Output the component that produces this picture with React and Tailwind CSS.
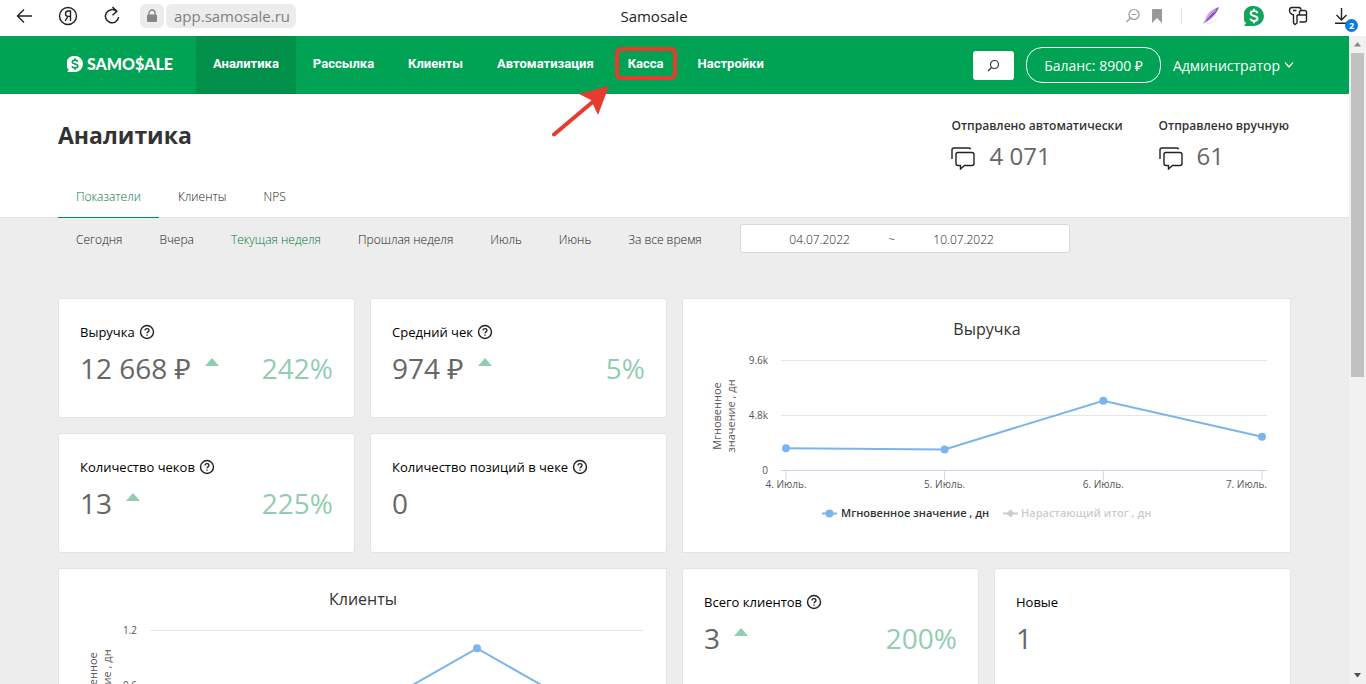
const menu = [
  { name: "Аналитика", active: true },
  { name: "Рассылка" },
  { name: "Клиенты" },
  { name: "Автоматизация" },
  { name: "Касса", marked: true },
  { name: "Настройки" },
];

const tabs = ["Показатели", "Клиенты", "NPS"];

const periods = ["Сегодня", "Вчера", "Текущая неделя", "Прошлая неделя", "Июль", "Июнь", "За все время"];

const days = ["4. Июль.", "5. Июль.", "6. Июль.", "7. Июль."];

function CoinIcon({ className, sign }) {
  return (
    <svg viewBox="0 0 20 20" className={className} aria-hidden="true">
      <path d="M10 0a10 10 0 1 1 0 20H1.2c-.9 0-1-.9-.4-1.4l1.4-1.4A10 10 0 0 1 10 0z" fill="currentColor" />
      <path
        d="M13.4 7.2c-.3-1.4-1.6-2.1-3.4-2.1-2 0-3.3.9-3.3 2.4 0 3.4 6.8 1.5 6.8 5 0 1.500-1.400 2.400-3.500 2.400-2 0-3.300-.8-3.600-2.300M10 2.800v2.400M10 14.800v2.400"
        fill="none"
        stroke={sign}
        strokeWidth="2"
      />
    </svg>
  );
}

function BrowserBar() {
  return (
    <div className="flex h-9 shrink-0 items-center bg-white pb-1 text-[#222]">
      <div className="flex w-[296px] shrink-0 items-center pl-4">
        <button aria-label="Назад">
          <svg width="17" height="16" viewBox="0 0 17 16" fill="none" stroke="currentColor" strokeWidth="1.4">
            <path d="M16 8H1.500M8 1.500 1.500 8 8 14.500" />
          </svg>
        </button>
        <button aria-label="Яндекс" className="ml-[25px]">
          <svg width="20" height="20" viewBox="0 0 20 20" fill="none" stroke="currentColor" strokeWidth="1.400">
            <circle cx="10" cy="10" r="8.500" />
            <path d="M12.500 15V5h-2.300C8.500 5 7.500 6.100 7.500 7.800c0 1.500.8 2.600 2.700 2.600h2.300M9.800 10.400 7.200 15" />
          </svg>
        </button>
        <button aria-label="Обновить" className="ml-[25px]">
          <svg width="18" height="20" viewBox="0 0 18 20" fill="none" stroke="currentColor" strokeWidth="1.500">
            <path d="M13.500 5.300A6.600 6.600 0 1 0 15.600 11M9.500 1l4.300 4.200-4.300 4" />
          </svg>
        </button>
        <button aria-label="Защищено" className="ml-[19px] flex size-6 items-center justify-center rounded-md bg-[#ececec]">
          <svg width="12" height="14" viewBox="0 0 12 14" fill="none">
            <path d="M3 6V4a3 3 0 0 1 6 0v2" stroke="#858585" strokeWidth="1.300" />
            <rect x="1" y="5.500" width="10" height="7.500" rx="1" fill="#858585" />
          </svg>
        </button>
        <span className="ml-[2px] flex h-6 flex-1 items-center rounded-md bg-[#ececec] pl-2 text-[15px] text-[#808080]">
          app.samosale.ru
        </span>
      </div>
      <div className="flex-1 text-center text-[15px]">Samosale</div>
      <div className="flex w-[354px] shrink-0 items-center justify-end pr-2">
        <svg width="16" height="16" viewBox="0 0 16 16" fill="none" stroke="#999" strokeWidth="1.200">
          <circle cx="9" cy="6.500" r="5" />
          <path d="M6.500 6.500h5M5.500 10 1.500 14" />
        </svg>
        <svg className="ml-[10px]" width="12" height="14" viewBox="0 0 12 14" fill="#999">
          <path d="M2 0h8a1 1 0 0 1 1 1v13l-5-5-5 5V1a1 1 0 0 1 1-1z" />
        </svg>
        <span className="ml-[18px] h-4 w-px bg-[#ddd]" />
        <svg className="ml-[19px]" width="20" height="20" viewBox="0 0 20 20">
          <path d="M4 18c5 1 11-3 13-8-3 5-8 7-13 8z" fill="#ddd" />
          <path d="M18 1C9 3 5 9 3 17c6-2 13-8 15-16z" fill="#cfaee6" />
          <path d="M18 1C11 5 6 11 2 18c5-4 13-9 16-17z" fill="#8d4fc2" />
          <path d="M15 4C10 7 6 12 2 18" stroke="#ead9f5" fill="none" strokeWidth=".8" />
        </svg>
        <CoinIcon className="ml-[23px] size-5 text-[#0fa65c]" sign="#fff" />
        <svg className="ml-[24px]" width="20" height="20" viewBox="0 0 20 20" fill="none" stroke="#222" strokeWidth="1.400">
          <path d="M9 9v8l-2 1.500L5.500 17V9C3 8 1.500 6.700 1.500 4.500c0-2 1-3 2.500-3h6.500c1.500 0 2.500 1 2.500 2.300M5 4.500h3.500" />
          <path d="M9 9h9.500M11.500 16h5a2 2 0 0 0 2-2V6.500a2 2 0 0 0-2-2h-3a2 2 0 0 0-2 2V9" />
        </svg>
        <div className="relative ml-[26px] flex w-[24px]">
          <svg width="16" height="18" viewBox="0 0 16 18" fill="none" stroke="#222" strokeWidth="1.400">
            <path d="M7.500 1v12M2.500 8l5 5 5-5M1 16.300h13" />
          </svg>
          <span className="absolute top-3 left-[11px] flex size-[13px] items-center justify-center rounded-full bg-[#0a7be0] text-[9px] font-bold text-white">
            2
          </span>
        </div>
      </div>
    </div>
  );
}

function Header() {
  return (
    <header className="flex h-[58px] items-center bg-[#00a254] pr-[55px] pl-[67px] text-white">
      <a href="#" className="flex w-[129px] items-center gap-1 pb-0.5 font-['Lato'] text-[16px] font-black">
        <CoinIcon className="size-4" sign="#00a254" />
        SAMO$ALE
      </a>
      <nav className="flex h-full font-['Roboto'] text-[13px] font-bold">
        {menu.map((item) => (
          <a
            key={item.name}
            href="#"
            className={`relative flex items-center px-[17px] pb-0.5 ${item.active ? "bg-[#00904a]" : ""}`}
          >
            {item.name}
            {item.marked && (
              <>
                <span className="absolute inset-x-1 top-[11px] h-[33px] rounded-md border-4 border-[#e63c30]" />
                <svg
                  className="absolute top-[49px] left-[-60px]"
                  width="60"
                  height="52"
                  viewBox="0 0 60 52"
                  fill="#e63c30"
                >
                  <path d="M3 49.500 44 15" stroke="#e63c30" strokeWidth="4" strokeLinecap="round" />
                  <path d="M58 1 28 9l12 6 7 15z" />
                </svg>
              </>
            )}
          </a>
        ))}
      </nav>
      <button aria-label="Поиск" className="ml-auto flex h-[29px] w-[41px] items-center justify-center rounded-[3px] bg-white">
        <svg width="13" height="13" viewBox="0 0 13 13" fill="none" stroke="#333" strokeWidth="1.200">
          <circle cx="7.500" cy="5.500" r="4" />
          <path d="M4.500 8.500 1 12" />
        </svg>
      </button>
      <button className="ml-3 h-9 rounded-[16px] border border-white px-[17px] text-[14px]">Баланс: 8900 ₽</button>
      <button className="ml-3 flex items-center gap-1 text-[14px]">
        Администратор
        <svg width="10" height="8" viewBox="0 0 10 8" fill="none" stroke="currentColor" strokeWidth="1.200">
          <path d="m1 1.500 4 4.500 4-4.500" />
        </svg>
      </button>
    </header>
  );
}

function Sent({ title, value }) {
  return (
    <div>
      <div className="text-[12px] leading-5 font-semibold text-[#333]">{title}</div>
      <div className="flex items-center gap-[14px] text-[24px] leading-10 text-[#666]">
        <svg className="mt-1" width="24" height="24" viewBox="0 0 24 24" fill="none" stroke="#222" strokeWidth="1.400">
          <path d="M1 13V4a2 2 0 0 1 2-2h15a2 2 0 0 1 1.700 1.300" />
          <path d="M7 6.500h14a2 2 0 0 1 2 2v9a2 2 0 0 1-2 2h-7.500L9.500 23v-3.500H7a2 2 0 0 1-2-2v-9a2 2 0 0 1 2-2z" />
        </svg>
        {value}
      </div>
    </div>
  );
}

function StatCard({ title, value, percent, help = true }) {
  return (
    <div className="rounded-[3px] border border-[#e4e4e4] bg-white px-[21px] pt-[23px]">
      <div className="flex items-center gap-1 text-[13px] leading-5 text-black">
        {title}
        {help && (
          <svg width="16" height="16" viewBox="0 0 16 16" fill="none" stroke="#222" strokeWidth="1.400">
            <circle cx="8" cy="8" r="6.500" />
            <path d="M6 6.600C6 5.400 6.900 4.700 8 4.700s2 .7 2 1.800c0 1.300-2 1.400-2 2.700M8 10.400v1.300" strokeWidth="1.300" />
          </svg>
        )}
      </div>
      <div className="mt-1 flex text-[28px] leading-[44px] text-[#666]">
        {value}
        {percent && (
          <>
            <svg className="mt-3 ml-[14px]" width="14" height="8" viewBox="0 0 14 8" fill="#92cdb1">
              <path d="M7 0 14 8H0z" />
            </svg>
            <span className="ml-auto text-[#92cdb1]">{percent}</span>
          </>
        )}
      </div>
    </div>
  );
}

function LineChart({ title, left, max, ticks, values }) {
  const right = 584;
  const top = 61;
  const bottom = 171;
  const step = (right - left - 10) / (values.length - 1);
  const x = (i) => left + 5 + i * step;
  const y = (v) => bottom - (v / max) * (bottom - top);

  return (
    <div className="col-span-2 row-span-2 border border-[#e4e4e4] bg-white">
      <svg viewBox="0 0 607 253" className="w-full" fill="#555" fontSize="10">
        <text x="304" y="36" fontSize="16" fill="#333" textAnchor="middle">
          {title}
        </text>
        <g textAnchor="middle" fontSize="11">
          <text transform="translate(38 117) rotate(-90)">Мгновенное</text>
          <text transform="translate(52 117) rotate(-90)">значение , дн</text>
        </g>
        {ticks.map((tick, i) => (
          <g key={tick}>
            <path
              d={`M${left} ${top + 55 * i + 0.5}H${right}`}
              stroke={i === ticks.length - 1 ? "#ccd6eb" : "#e6e6e6"}
            />
            <text x={left - 13} y={top + 55 * i + 4} textAnchor="end">
              {tick}
            </text>
          </g>
        ))}
        {days.map((day, i) => (
          <g key={day}>
            <path d={`M${x(i)} ${bottom}v10`} stroke="#ccd6eb" />
            <text
              x={i === days.length - 1 ? right : x(i)}
              y="189"
              textAnchor={i === days.length - 1 ? "end" : "middle"}
            >
              {day}
            </text>
          </g>
        ))}
        <polyline
          points={values.map((v, i) => `${x(i)},${y(v)}`).join(" ")}
          fill="none"
          stroke="#7cb5ec"
          strokeWidth="2"
        />
        {values.map((v, i) => (
          <circle key={i} cx={x(i)} cy={y(v)} r="4" fill="#7cb5ec" />
        ))}
        <g fontSize="11" fontWeight="600">
          <path d="M139 214.500h15" stroke="#7cb5ec" strokeWidth="2" />
          <circle cx="146.500" cy="214.500" r="4" fill="#7cb5ec" />
          <text x="158" y="218" fill="#333">
            Мгновенное значение , дн
          </text>
          <path d="M320 214.500h15" stroke="#ccc" strokeWidth="2" />
          <path d="m327.500 210.500 4 4-4 4-4-4z" fill="#ccc" />
          <text x="338" y="218" fill="#ccc">
            Нарастающий итог , дн
          </text>
        </g>
      </svg>
    </div>
  );
}

function Scrollbar() {
  return (
    <div className="flex w-[17px] shrink-0 flex-col items-center bg-[#f1f1f1]">
      <svg width="17" height="17" viewBox="0 0 17 17" fill="#8a8a8a">
        <path d="M8.500 6 12 10.500H5z" />
      </svg>
      <div className="h-1/2 w-[13px] bg-[#c1c1c1]" />
      <svg className="mt-auto" width="17" height="17" viewBox="0 0 17 17" fill="#505050">
        <path d="M8.500 10.500 12 6H5z" />
      </svg>
    </div>
  );
}

export default function App() {
  return (
    <div className="flex h-screen flex-col overflow-hidden font-['Open_Sans','Noto_Sans',sans-serif]">
      <BrowserBar />
      <div className="flex min-h-0 flex-1">
        <div className="min-w-0 flex-1 overflow-hidden bg-[#ededed]">
          <Header />

          <div className="border-b border-[#e2e2e2] bg-white px-[58px] pt-[22px]">
            <div className="flex items-start justify-between">
              <h1 className="text-[23px] leading-[38px] font-bold text-[#333]">Аналитика</h1>
              <div className="flex gap-9 pr-0.5">
                <Sent title="Отправлено автоматически" value="4 071" />
                <Sent title="Отправлено вручную" value="61" />
              </div>
            </div>
            <div className="-mb-px flex gap-px text-[12px] font-light text-[#222]">
              {tabs.map((tab, i) => (
                <button
                  key={tab}
                  className={`h-[42px] border-b px-[18px] ${i === 0 ? "border-[#00904a] text-[#00783a]" : "border-transparent"}`}
                >
                  {tab}
                </button>
              ))}
            </div>
          </div>

          <div className="px-[58px] pt-[6px]">
            <div className="flex items-center text-[12px] font-light text-[#222]">
              <div className="flex gap-px pt-0.5">
                {periods.map((period) => (
                  <button
                    key={period}
                    className={`px-[18px] ${period === "Текущая неделя" ? "text-[#00783a]" : ""}`}
                  >
                    {period}
                  </button>
                ))}
              </div>
              <div className="ml-5 flex h-[29px] w-[330px] items-center rounded-[3px] border border-[#d9d9d9] bg-white pt-0.5 pl-3">
                <input aria-label="Начало периода" defaultValue="04.07.2022" className="w-[134px] text-center" />
                <span className="w-[10px] text-center">~</span>
                <input aria-label="Конец периода" defaultValue="10.07.2022" className="w-[134px] text-center" />
              </div>
            </div>

            <div className="mt-[45px] grid auto-rows-[120px] grid-cols-4 gap-[15px]">
              <StatCard title="Выручка" value="12 668 ₽" percent="242%" />
              <StatCard title="Средний чек" value="974 ₽" percent="5%" />
              <LineChart
                title="Выручка"
                left={98}
                max={9.6}
                ticks={["9.6k", "4.8k", "0"]}
                values={[1.9, 1.8, 6.05, 2.9]}
              />
              <StatCard title="Количество чеков" value="13" percent="225%" />
              <StatCard title="Количество позиций в чеке" value="0" />
              <LineChart title="Клиенты" left={91} max={1.2} ticks={["1.2", "0.6", "0"]} values={[0, 0, 1, 0]} />
              <StatCard title="Всего клиентов" value="3" percent="200%" />
              <StatCard title="Новые" value="1" help={false} />
            </div>
          </div>
        </div>
        <Scrollbar />
      </div>
    </div>
  );
}
